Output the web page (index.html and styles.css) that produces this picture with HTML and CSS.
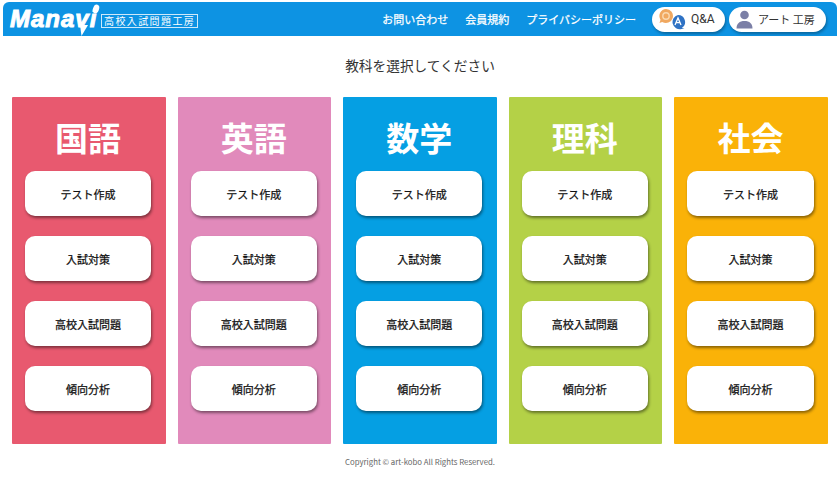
FILE: index.html
```html
<!DOCTYPE html>
<html lang="ja">
<head>
  <meta charset="UTF-8">
  <title>Manavi 高校入試問題工房</title>
  <link rel="stylesheet" href="styles.css">
</head>
<body>
  <header class="top">
    <div class="logo">
      <span class="logo-name">Manavi</span>
      <svg class="logo-marks" width="92" height="33" viewBox="0 0 92 33">
        <path d="M70 22l8 0-6.500 11z" fill="#fff"/>
        <ellipse cx="86" cy="6" rx="3" ry="4.500" transform="rotate(20 86 6)" fill="#fff"/>
      </svg>
      <span class="logo-sub">高校入試問題工房</span>
    </div>
    <nav class="menu">
      <a>お問い合わせ</a>
      <a>会員規約</a>
      <a>プライバシーポリシー</a>
    </nav>
    <div class="pills">
      <a class="pill pill-qa">
        <svg width="27" height="21" viewBox="0 0 27 21">
          <path d="M7 0a7 7 0 1 1-3.800 12.900l-2.700 1 1-3.100A7 7 0 0 1 7 0z" fill="#f0a860"/>
          <circle cx="7" cy="7" r="3.200" fill="none" stroke="#fbd9b0" stroke-width="1.400"/>
          <path d="M19 6a7 7 0 0 1 3.800 12.900l2.700 1.100-1-.1-2 .1A7 7 0 1 1 19 6z" fill="#2f72c4"/>
          <path d="M16 16l3-7 3 7M17.100 13.700h3.800" fill="none" stroke="#fff" stroke-width="1.300"/>
        </svg>
        <span>Q&amp;A</span>
      </a>
      <a class="pill pill-user">
        <svg width="17" height="19" viewBox="0 0 17 19">
          <circle cx="8.500" cy="5" r="4.300" fill="#7b7fa6"/>
          <path d="M0.500 18.500c0-5 3-7.500 8-7.500s8 2.500 8 7.500z" fill="#7b7fa6"/>
        </svg>
        <span>アート 工房</span>
      </a>
    </div>
  </header>

  <h1 class="lead">教科を選択してください</h1>

  <main class="subjects">
    <section class="subject kokugo">
      <h2>国語</h2>
      <a class="btn">テスト作成</a>
      <a class="btn">入試対策</a>
      <a class="btn">高校入試問題</a>
      <a class="btn">傾向分析</a>
    </section>
    <section class="subject eigo">
      <h2>英語</h2>
      <a class="btn">テスト作成</a>
      <a class="btn">入試対策</a>
      <a class="btn">高校入試問題</a>
      <a class="btn">傾向分析</a>
    </section>
    <section class="subject sugaku">
      <h2>数学</h2>
      <a class="btn">テスト作成</a>
      <a class="btn">入試対策</a>
      <a class="btn">高校入試問題</a>
      <a class="btn">傾向分析</a>
    </section>
    <section class="subject rika">
      <h2>理科</h2>
      <a class="btn">テスト作成</a>
      <a class="btn">入試対策</a>
      <a class="btn">高校入試問題</a>
      <a class="btn">傾向分析</a>
    </section>
    <section class="subject shakai">
      <h2>社会</h2>
      <a class="btn">テスト作成</a>
      <a class="btn">入試対策</a>
      <a class="btn">高校入試問題</a>
      <a class="btn">傾向分析</a>
    </section>
  </main>

  <footer class="copy">Copyright © art-kobo All Rights Reserved.</footer>
</body>
</html>
```
FILE: styles.css
```css
html, body { height: 100%; }
body {
  margin: 0;
  padding: 2px 3px 0;
  box-sizing: border-box;
  background: #fff;
  color: #333;
  font-family: "Noto Sans CJK JP", "Noto Sans", sans-serif;
  overflow: hidden;
}

.top {
  display: flex;
  align-items: center;
  height: 34px;
  padding: 0 11px 0 7px;
  background: #0d93e3;
  border-radius: 6px 6px 0 0;
}
.logo { position: relative; display: flex; align-items: center; gap: 3px; }
.logo-name {
  width: 88px;
  font-family: "Liberation Sans", sans-serif;
  font-style: italic;
  font-weight: 700;
  font-size: 24px;
  line-height: 34px;
  letter-spacing: 1px;
  color: #fff;
  -webkit-text-stroke: 1px #fff;
}
.logo-marks { position: absolute; left: 0; top: 1px; }
.logo-sub {
  margin-top: 3px;
  padding: 0 2px;
  border: 1px solid #cfe9fa;
  font-size: 10px;
  line-height: 12px;
  letter-spacing: 1.4px;
  color: #fff;
}
.menu {
  display: flex;
  gap: 17px;
  margin-left: auto;
  font-size: 11px;
  font-weight: 400;
  -webkit-text-stroke: 0.25px #fff;
  color: #fff;
}
.pills { display: flex; gap: 4px; margin-left: 16px; }
.pill {
  display: flex;
  align-items: center;
  height: 25px;
  border-radius: 13px;
  background: #fff;
  box-shadow: 1px 2px 3px rgba(0, 0, 0, 0.3);
  font-size: 11px;
  color: #333;
}
.pill-qa { width: 73px; gap: 5px; padding-left: 7px; box-sizing: border-box; }
.pill-qa span { font-family: "Roboto", sans-serif; font-size: 12px; }
.pill-user { width: 97px; gap: 5px; padding-left: 7px; box-sizing: border-box; }

.lead {
  margin: 0;
  padding: 18px 0 21px;
  height: 61px;
  box-sizing: border-box;
  text-align: center;
  font-size: 13.700px;
  line-height: 22px;
  font-weight: 400;
}

.subjects {
  display: grid;
  grid-template-columns: repeat(5, 1fr);
  gap: 12px;
  padding: 0 9px;
}
.subject {
  display: flex;
  flex-direction: column;
  gap: 20px;
  height: 347px;
  padding: 0 14.500px 0 13px;
  box-sizing: border-box;
  border-radius: 1px;
}
.subject h2 {
  margin: 0 0 -20px;
  height: 74px;
  text-align: center;
  font-size: 33px;
  line-height: 80px;
  font-weight: 700;
  color: #fff;
}
.kokugo { background: #e8596f; }
.eigo { background: #e18abb; }
.sugaku { background: #059fe3; }
.rika { background: #b4d147; }
.shakai { background: #fab208; }

.btn {
  display: flex;
  align-items: center;
  justify-content: center;
  height: 45px;
  border-radius: 10px;
  background: #fff;
  box-shadow: 1px 2px 3px rgba(0, 0, 0, 0.45);
  font-size: 11px;
  font-weight: 400;
  -webkit-text-stroke: 0.25px #111;
  color: #111;
}

.copy {
  margin-top: 10px;
  text-align: center;
  font-size: 7.800px;
  line-height: 16px;
  color: #666;
}
```
